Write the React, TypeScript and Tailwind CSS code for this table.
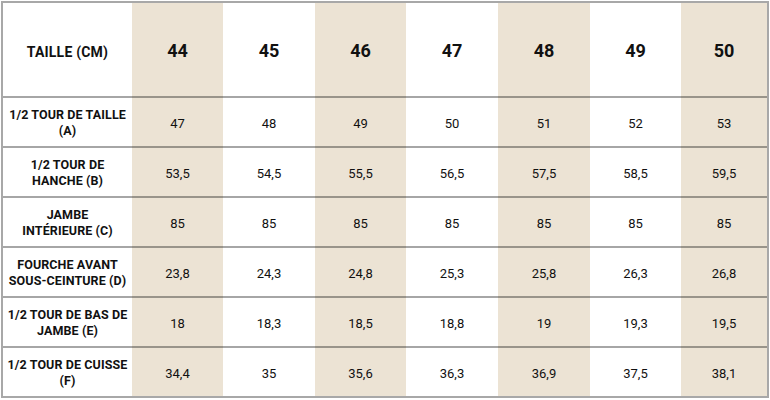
const sizes = ["44", "45", "46", "47", "48", "49", "50"];

const rows: { label: string[]; values: string[] }[] = [
  { label: ["1/2 TOUR DE TAILLE", "(A)"], values: ["47", "48", "49", "50", "51", "52", "53"] },
  { label: ["1/2 TOUR DE", "HANCHE (B)"], values: ["53,5", "54,5", "55,5", "56,5", "57,5", "58,5", "59,5"] },
  { label: ["JAMBE", "INTÉRIEURE (C)"], values: ["85", "85", "85", "85", "85", "85", "85"] },
  { label: ["FOURCHE AVANT", "SOUS-CEINTURE (D)"], values: ["23,8", "24,3", "24,8", "25,3", "25,8", "26,3", "26,8"] },
  { label: ["1/2 TOUR DE BAS DE", "JAMBE (E)"], values: ["18", "18,3", "18,5", "18,8", "19", "19,3", "19,5"] },
  { label: ["1/2 TOUR DE CUISSE", "(F)"], values: ["34,4", "35", "35,6", "36,3", "36,9", "37,5", "38,1"] },
];

const shade = (i: number) => (i % 2 === 0 ? "bg-[#ece3d4]" : "bg-white");

export default function App() {
  return (
    <div className="w-[770px] h-[400px] bg-white font-['Roboto',sans-serif] text-[#111]">
      <div className="m-px w-[768px] border-2 border-[#a8a8a8]">
        <div className="grid grid-cols-[129px_91px_92px_91px_92px_92px_91px_86px]">
          <div className="h-[95px] border-b-2 border-black/35 flex items-center justify-center pt-[6px] text-[14px] tracking-[0.2px] font-bold">
            TAILLE (CM)
          </div>
          {sizes.map((s, i) => (
            <div
              key={s}
              className={`h-[95px] border-b-2 border-black/35 flex items-center justify-center pt-[2px] text-[18px] font-bold ${shade(i)}`}
            >
              {s}
            </div>
          ))}

          {rows.map((row, r) => {
            const last = r === rows.length - 1;
            const cell = last ? "h-[48px]" : "h-[50px] border-b-2 border-black/35";
            return [
              <div
                key={`l${r}`}
                className={`${cell} flex flex-col items-center justify-center pt-[2px] text-[12.5px] tracking-[0.1px] font-bold leading-[16px] text-center`}
              >
                {row.label.map((t) => (
                  <span key={t}>{t}</span>
                ))}
              </div>,
              ...row.values.map((v, i) => (
                <div
                  key={`v${r}-${i}`}
                  className={`${cell} flex items-center justify-center pt-[4px] text-[13px] ${shade(i)}`}
                >
                  {v}
                </div>
              )),
            ];
          })}
        </div>
      </div>
    </div>
  );
}
